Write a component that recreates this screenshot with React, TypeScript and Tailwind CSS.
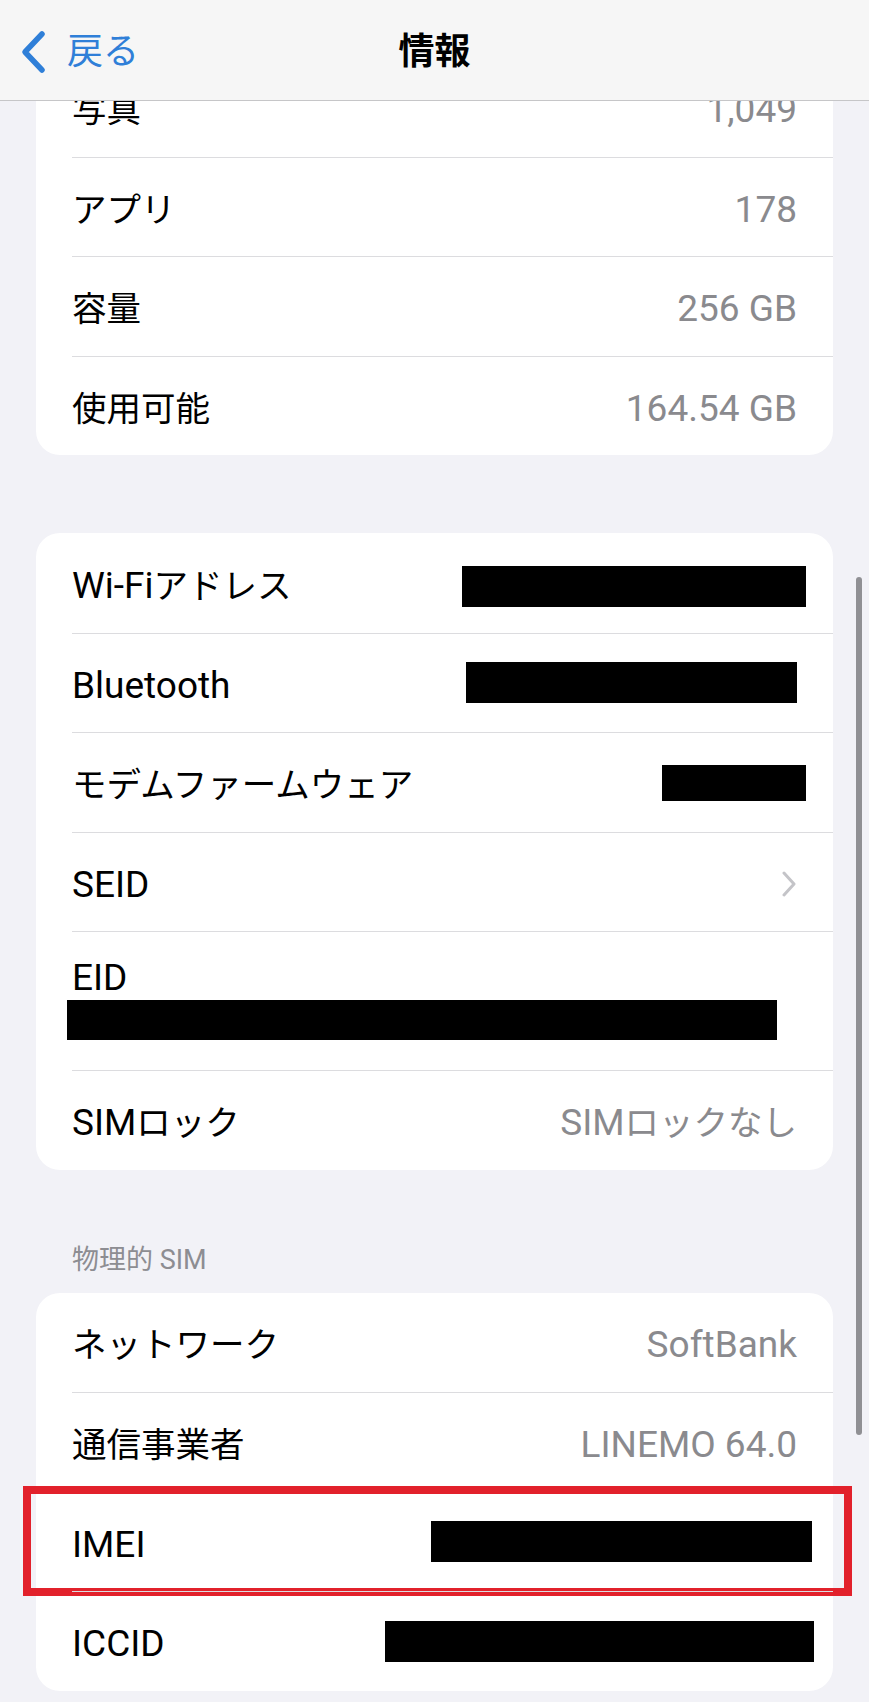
import React from "react";

type Row = {
  label: string;
  value?: string;
  bar?: string; // tailwind classes for a redacted bar
  chevron?: boolean;
};

const font = "font-['Roboto','Noto_Sans_CJK_JP',sans-serif]";

const storage: Row[] = [
  { label: "写真", value: "1,049" },
  { label: "アプリ", value: "178" },
  { label: "容量", value: "256 GB" },
  { label: "使用可能", value: "164.54 GB" },
];

const network: Row[] = [
  { label: "Wi-Fiアドレス", bar: "w-[344px] h-[41px] mr-[-9px] mt-[8px]" },
  { label: "Bluetooth", bar: "w-[331px] h-[41px]" },
  { label: "モデムファームウェア", bar: "w-[144px] h-[36px] mr-[-9px] mt-[2px]" },
  { label: "SEID", chevron: true },
];

const sim: Row[] = [
  { label: "ネットワーク", value: "SoftBank" },
  { label: "通信事業者", value: "LINEMO 64.0" },
  { label: "IMEI", bar: "w-[381px] h-[41px] mr-[-15px]" },
  { label: "ICCID", bar: "w-[429px] h-[41px] mr-[-17px]" },
];

// Japanese runs are set a touch smaller than latin, like the iOS font mix
function Txt({ text, className }: { text: string; className?: string }) {
  const parts = text.split(/([\u3000-\u30ff\u4e00-\u9fff\uff00-\uffef]+)/).filter(Boolean);
  return (
    <span className={`translate-y-[3px] text-[37px] leading-[44px] ${className ?? ""}`}>
      {parts.map((p, i) =>
        /[\u3000-\u30ff\u4e00-\u9fff\uff00-\uffef]/.test(p) ? (
          <span key={i} className="text-[34.5px]">
            {p}
          </span>
        ) : (
          <span key={i}>{p}</span>
        )
      )}
    </span>
  );
}

function Chevron() {
  return (
    <svg width="16" height="26" viewBox="0 0 16 26" className="translate-y-[2px]">
      <path d="M3 2 L13 13 L3 24" fill="none" stroke="#c4c4c8" strokeWidth="3" strokeLinecap="round" strokeLinejoin="round" />
    </svg>
  );
}

function ListRow({ row, first, highlight }: { row: Row; first: boolean; highlight?: boolean }) {
  return (
    <div className="relative h-[99.5px] pl-[36px]">
      <div
        className={`flex h-full items-center pr-[36px] ${first ? "" : "border-t border-[#dcdcdf]"}`}
      >
        <Txt text={row.label} className="text-black" />
        <div className="ml-auto flex items-center">
          {row.value && <Txt text={row.value} className="text-[#8a8a8e]" />}
          {row.bar && <div className={`bg-black ${row.bar}`} />}
          {row.chevron && <Chevron />}
        </div>
      </div>
      {highlight && (
        <div className="pointer-events-none absolute left-[-13px] right-[-19px] top-[-6px] h-[110px] border-[8px] border-[#e2212b]" />
      )}
    </div>
  );
}

export default function App() {
  return (
    <div className={`relative h-[1702px] w-[869px] overflow-hidden bg-[#f2f2f7] ${font}`}>
      {/* Nav bar */}
      <div className="absolute left-0 right-0 top-0 z-10 grid h-[101px] grid-cols-[1fr_auto_1fr] items-center border-b border-[#c6c6c8] bg-[#f6f6f6] pt-[4px]">
        <div className="flex items-center pl-[19px]">
          <svg width="28" height="44" viewBox="0 0 28 44">
            <path d="M23 4 L6 22 L23 40" fill="none" stroke="#2f7fd8" strokeWidth="5.5" strokeLinecap="round" strokeLinejoin="round" />
          </svg>
          <span className="ml-[20px] text-[36px] leading-[44px] text-[#2f7fd8]">戻る</span>
        </div>
        <span className="text-[36px] font-semibold leading-[44px] text-black">情報</span>
        <div />
      </div>

      {/* Scroll indicator */}
      <div className="absolute right-[7px] top-[577px] h-[858px] w-[6px] rounded-full bg-[#909094]" />

      <div className="px-[36px] pt-[57px]">
        <div className="overflow-hidden rounded-[24px] bg-white">
          {storage.map((r, i) => (
            <ListRow key={r.label} row={r} first={i === 0} />
          ))}
        </div>

        <div className="mt-[78px] overflow-hidden rounded-[24px] bg-white">
          {network.map((r, i) => (
            <ListRow key={r.label} row={r} first={i === 0} />
          ))}
          <div className="pl-[36px]">
            <div className="flex h-[139px] flex-col border-t border-[#dcdcdf] pt-[21px]">
              <Txt text="EID" className="text-black" />
              <div className="ml-[-5px] mt-[3px] h-[40px] w-[710px] bg-black" />
            </div>
          </div>
          <ListRow row={{ label: "SIMロック", value: "SIMロックなし" }} first={false} />
        </div>

        <div className="pb-[16px] pl-[36px] pt-[73px] text-[27px] leading-[34px] text-[#8d8d92]">物理的 SIM</div>

        <div className="rounded-[24px] bg-white">
          {sim.map((r, i) => (
            <ListRow key={r.label} row={r} first={i === 0} highlight={r.label === "IMEI"} />
          ))}
        </div>
      </div>
    </div>
  );
}
